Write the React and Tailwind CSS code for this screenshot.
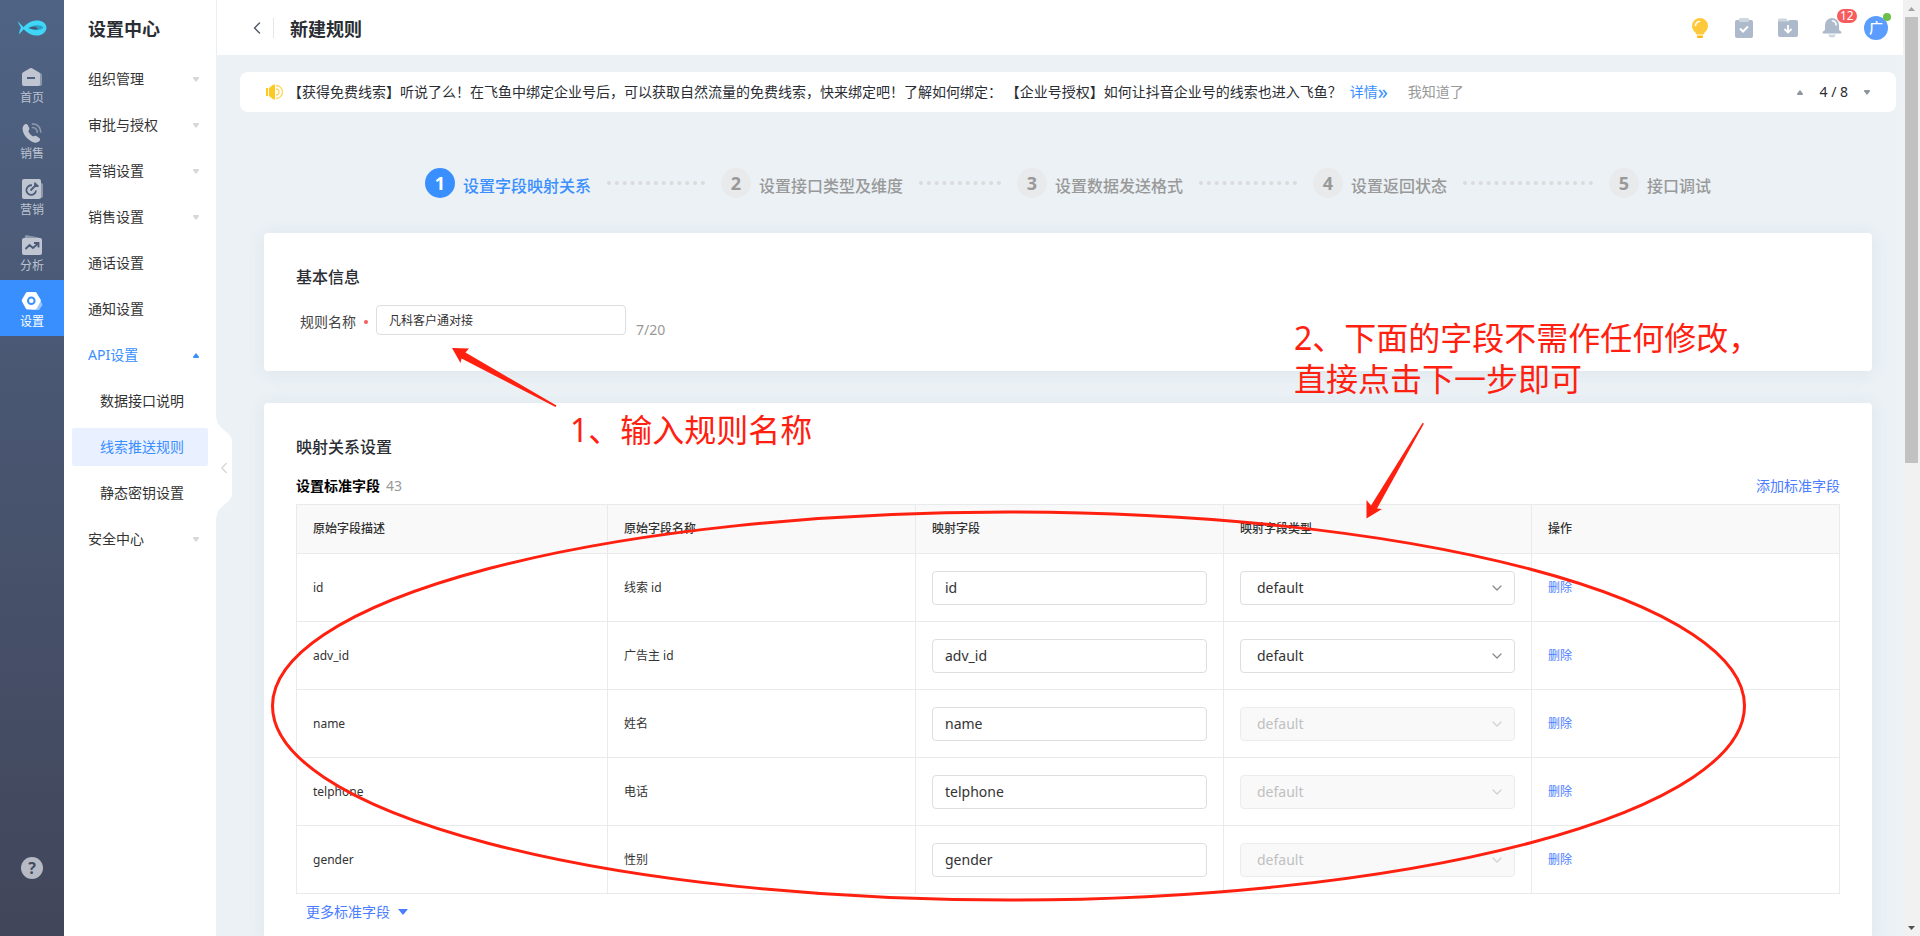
import React, { useState } from "react";
import { ChevronDown, ChevronLeft } from "lucide-react";

const navItems = [
  { label: "首页", icon: HomeIcon },
  { label: "销售", icon: PhoneIcon },
  { label: "营销", icon: TargetIcon },
  { label: "分析", icon: ChartIcon },
  { label: "设置", icon: SettingIcon, active: true },
];

const menuItems = [
  { label: "组织管理", arrow: "down" },
  { label: "审批与授权", arrow: "down" },
  { label: "营销设置", arrow: "down" },
  { label: "销售设置", arrow: "down" },
  { label: "通话设置" },
  { label: "通知设置" },
  {
    label: "API设置",
    arrow: "up",
    children: ["数据接口说明", "线索推送规则", "静态密钥设置"],
  },
  { label: "安全中心", arrow: "down" },
];

const steps = [
  "设置字段映射关系",
  "设置接口类型及维度",
  "设置数据发送格式",
  "设置返回状态",
  "接口调试",
];

const initialFields = [
  { key: "id", name: "线索 id" },
  { key: "adv_id", name: "广告主 id" },
  { key: "name", name: "姓名", disabled: true },
  { key: "telphone", name: "电话", disabled: true },
  { key: "gender", name: "性别", disabled: true },
];

function HomeIcon() {
  return (
    <svg width="22" height="22" viewBox="0 0 22 22">
      <path d="M15 5l4 2a2 2 0 0 1 2 2v9a2 2 0 0 1-2 2h-4z" fill="#8c98ac" />
      <path
        d="M2.2 6.2L9 2.2a2 2 0 0 1 2 0l6.8 4a2 2 0 0 1 1.2 1.8V18a2 2 0 0 1-2 2H3a2 2 0 0 1-2-2V8a2 2 0 0 1 1.200-1.800z"
        fill="#c0c6d1"
      />
      <rect x="6" y="11" width="8" height="2" fill="#4d607e" />
    </svg>
  );
}

function PhoneIcon() {
  return (
    <svg width="22" height="22" viewBox="0 0 22 22">
      <path
        d="M3 3c1.500-1.500 3.200-1.200 4 .5l1.200 2.600c.5 1.100 0 1.900-.9 2.800.9 2.500 2.600 4.400 5 5.700 1-1 2-1.200 3-.6l2.600 1.700c1.500 1 1.500 2.400.3 3.600-1.700 1.600-4 1.900-6.600.7C6.500 17.600 3 13.800 1.800 8.600 1.300 6.300 1.600 4.400 3 3z"
        fill="#c0c6d1"
      />
      <g fill="none" stroke="#8c98ac" strokeWidth="1.700" strokeLinecap="round">
        <path d="M11.500 1.800c4.800.2 8 3.500 8.300 8.200" />
        <path d="M11.500 5.500c2.800.2 4.500 1.900 4.700 4.700" />
      </g>
    </svg>
  );
}

function TargetIcon() {
  return (
    <svg width="22" height="22" viewBox="0 0 22 22">
      <rect x="5" y="5" width="17" height="15" rx="2" fill="#8c98ac" />
      <rect x="1" y="1" width="19" height="20" rx="2" fill="#c0c6d1" />
      <g fill="none" stroke="#4b5d7a" strokeWidth="1.800">
        <path d="M11 7.300a4.800 4.800 0 1 0 4 5.200" />
        <path d="M9.500 12.500L16 6M14 4.500v3.500h3.500" />
      </g>
    </svg>
  );
}

function ChartIcon() {
  return (
    <svg width="22" height="22" viewBox="0 0 22 22">
      <path d="M5 1l13 2.500v3H3L4 2z" fill="#8c98ac" />
      <rect x="1" y="4" width="20" height="17" rx="2" fill="#c0c6d1" />
      <path
        d="M4.500 15l4-4 3.500 3 5-4.500M13 9h4.500v4.500"
        fill="none"
        stroke="#4b5b77"
        strokeWidth="1.800"
      />
    </svg>
  );
}

function SettingIcon() {
  return (
    <svg width="22" height="22" viewBox="0 0 22 22">
      <path d="M14 6l5 3 2.500 6-3.500 5h-8z" fill="#9cc5ff" />
      <path
        d="M6.500 2h7.500a2 2 0 0 1 1.700 1L19.500 9.500a2 2 0 0 1 0 2L15.700 18.500a2 2 0 0 1-1.700 1H6.500a2 2 0 0 1-1.700-1L1 11.500a2 2 0 0 1 0-2L4.800 3a2 2 0 0 1 1.700-1z"
        fill="#fff"
      />
      <circle cx="10.300" cy="10.800" r="3.300" fill="none" stroke="#3a8fff" strokeWidth="2" />
    </svg>
  );
}

function Triangle({ up, className }) {
  return (
    <svg width="6" height="5" viewBox="0 0 6 5" className={className}>
      <path
        d={up ? "M3 0L5.800 3.500V5H.2V3.500z" : "M3 5L.2 1.500V0h5.600v1.500z"}
        fill="currentColor"
      />
    </svg>
  );
}

function Rail() {
  return (
    <nav className="flex w-16 shrink-0 flex-col items-center bg-linear-to-b from-[#4f6384] to-[#41465a]">
      <a href="#" aria-label="飞鱼" className="flex h-14 items-center">
        <svg width="30" height="16" viewBox="0 0 30 16">
          <path
            d="M.5 1C3 3.500 5 5.500 6.500 7.200 10 3 15 .5 20 .5c5 0 9 2.500 9.500 7.200C29 12.500 25 15.500 20 15.500c-5 0-9.500-2-13.300-6.300L2 14.500C2.500 11 3 9 4 7.800 3 6 1.500 3.500.5 1z"
            fill="#3fd6f8"
          />
          <path d="M11 8c3-2 6-2.800 9-2.800 3 0 5 .8 6.500 2.300-1.500 1.700-4 2.500-7 2.500-3 0-6-.7-8.500-2z" fill="#2b9fc4" />
          <path d="M12 8c2.500-1.200 4.500-1.500 7-1.300l2 2.600c-3.500.5-6 0-9-1.300z" fill="#455878" />
        </svg>
      </a>
      {navItems.map(({ label, icon: Icon, active }) => (
        <a
          key={label}
          href="#"
          className={
            active
              ? "flex h-14 w-full flex-col items-center bg-[#3a8fff] pt-[10px] text-xs leading-4 text-white"
              : "flex h-14 w-full flex-col items-center pt-[10px] text-xs leading-4 text-[#bcc3cf]"
          }
        >
          <Icon />
          <span className="mt-[2px]">{label}</span>
        </a>
      ))}
      <button
        aria-label="帮助"
        className="mt-auto mb-[57px] flex size-[22px] items-center justify-center rounded-full bg-[#b6bac4] text-base font-bold text-[#434b60]"
      >
        ?
      </button>
    </nav>
  );
}

function SideMenu() {
  return (
    <aside className="relative w-[152px] shrink-0 bg-white text-sm text-[#333]">
      <h1 className="flex h-14 items-center pt-[2px] pl-6 text-lg font-bold text-[#2a2d33]">
        设置中心
      </h1>
      <ul>
        {menuItems.map((item) => (
          <li key={item.label}>
            <a
              href="#"
              className={
                item.children
                  ? "flex h-[46px] items-center justify-between pr-[17px] pl-6 text-[#3a8fff]"
                  : "flex h-[46px] items-center justify-between pr-[17px] pl-6"
              }
            >
              {item.label}
              {item.arrow && (
                <Triangle
                  up={item.arrow === "up"}
                  className={item.arrow === "up" ? "text-[#3a8fff]" : "text-[#d5d7db]"}
                />
              )}
            </a>
            {item.children && (
              <ul>
                {item.children.map((child, i) => (
                  <li key={child} className="px-2 py-1">
                    <a
                      href="#"
                      className={
                        i === 1
                          ? "flex h-[38px] items-center rounded-xs bg-[#e9f0ff] pl-7 text-[#3a8fff]"
                          : "flex h-[38px] items-center pl-7"
                      }
                    >
                      {child}
                    </a>
                  </li>
                ))}
              </ul>
            )}
          </li>
        ))}
      </ul>
      {/* collapse handle sticking out of the menu */}
      <button
        aria-label="收起"
        className="absolute top-[414px] left-full z-10 flex h-[108px] w-4 items-center justify-center text-[#d3d6da]"
      >
        <svg width="16" height="108" viewBox="0 0 16 108" className="absolute inset-0">
          <path d="M0 0c0 8 3 12 8 16 5 4 8 7 8 12v51c0 5-3 8-8 12-5 4-8 8-8 17z" fill="#fff" />
        </svg>
        <ChevronLeft size={18} strokeWidth={1.800} className="relative shrink-0" />
      </button>
    </aside>
  );
}

function Header() {
  return (
    <header className="flex h-[55px] shrink-0 items-center border-l border-[#e9eff4] bg-white pr-[5px] pl-8">
      <button aria-label="返回" className="flex w-4 justify-center text-[#555b66]">
        <ChevronLeft size={20} strokeWidth={1.800} className="shrink-0" />
      </button>
      <span className="mx-2 h-5 w-px bg-[#e3e6ea]" />
      <h2 className="pt-[2px] pl-2 text-lg font-bold text-[#2a2d33]">新建规则</h2>
      <div className="ml-auto flex items-center">
        <button aria-label="提示" className="flex w-11 justify-center">
          <svg width="18" height="22" viewBox="0 0 18 22">
            <path
              d="M9 1a8 8 0 0 1 8 8c0 3-1.500 4.600-3 6.200-.8.900-1.200 1.300-1.200 2.300H5.200c0-1-.4-1.400-1.200-2.300C2.500 13.600 1 12 1 9a8 8 0 0 1 8-8z"
              fill="#ffc93c"
            />
            <path d="M6 18.500h6v1.500a1 1 0 0 1-1 1H7a1 1 0 0 1-1-1z" fill="#ffb914" />
            <path d="M4.500 8.500a4.500 4.500 0 0 1 4-4" fill="none" stroke="#fff" strokeWidth="1.600" strokeLinecap="round" />
          </svg>
        </button>
        <button aria-label="任务" className="flex w-11 justify-center">
          <svg width="20" height="22" viewBox="0 0 20 22">
            <rect x="5" y="1" width="10" height="5" rx="1.500" fill="#ced6e0" />
            <rect x="1" y="3" width="18" height="18" rx="2" fill="#adbacc" />
            <path d="M5 1.800h10v1.700a1.500 1.500 0 0 1-1.500 1.500h-7A1.500 1.500 0 0 1 5 3.500z" fill="#ced6e0" />
            <path d="M6 11.500l3 3 5-5" fill="none" stroke="#fff" strokeWidth="2" />
          </svg>
        </button>
        <button aria-label="下载" className="flex w-11 justify-center">
          <svg width="22" height="22" viewBox="0 0 22 22">
            <path d="M1 3a1.500 1.500 0 0 1 1.500-1.500H9L12 5v4H1z" fill="#ced6e0" />
            <path d="M1 4.500h10L12.500 3H19a2 2 0 0 1 2 2v13a2 2 0 0 1-2 2H3a2 2 0 0 1-2-2z" fill="#adbacc" />
            <path d="M11 8v7.500M7.500 12l3.500 3.500 3.500-3.500" fill="none" stroke="#fff" strokeWidth="1.800" />
          </svg>
        </button>
        <button aria-label="通知" className="relative flex w-11 justify-center">
          <svg width="20" height="22" viewBox="0 0 20 22">
            <path d="M6.500 17.500h7a3.500 3 0 0 1-7 0z" fill="#ced6e0" />
            <path
              d="M10 1a7 7 0 0 1 7 7v5l2 1.500c.8.700.5 2-.5 2h-17c-1 0-1.300-1.300-.5-2L3 13V8a7 7 0 0 1 7-7z"
              fill="#adbacc"
            />
            <path d="M10.500 4A3.500 3.500 0 0 1 14 8" fill="none" stroke="#fff" strokeWidth="1.600" strokeLinecap="round" />
          </svg>
          <span className="absolute -top-2 left-[27px] h-[14px] rounded-full bg-[#f75b5b] px-[3px] text-xs leading-[14px] text-white">
            12
          </span>
        </button>
        <button aria-label="账号" className="relative flex w-11 justify-center">
          <span className="flex size-6 items-center justify-center rounded-full bg-[#5b9dff] text-sm font-medium text-white">
            广
          </span>
          <span className="absolute -top-[3px] right-[7px] size-2 rounded-full bg-[#6cc04a]" />
        </button>
      </div>
    </header>
  );
}

function Notice() {
  return (
    <div className="mt-[17px] mr-[7px] ml-6 flex h-10 items-center rounded-lg bg-white pr-6 pl-[26px] text-sm text-[#2a2d33]">
      <svg width="17" height="16" viewBox="0 0 17 16" className="mr-[5px] shrink-0">
        <path d="M0 4h2v8H0zM3 4l4.500-3.500H9v15H7.500L3 12z" fill="#ffc81f" />
        <path d="M10 5a3 3 0 0 1 0 6M10 1.500a6.500 6.500 0 0 1 0 13" fill="none" stroke="#ffd75e" strokeWidth="1.300" />
      </svg>
      <p className="whitespace-nowrap">
        【获得免费线索】听说了么！在飞鱼中绑定企业号后，可以获取自然流量的免费线索，快来绑定吧！了解如何绑定：
        【企业号授权】如何让抖音企业号的线索也进入飞鱼？
      </p>
      <a href="#" className="ml-2 flex items-center whitespace-nowrap text-[#3a8fff]">
        详情<span className="text-xl leading-5">»</span>
      </a>
      <button className="ml-5 whitespace-nowrap text-[#999]">我知道了</button>
      <div className="ml-auto flex items-center gap-4 pr-[2px]">
        <button aria-label="上一条">
          <Triangle up className="text-[#8f959e]" />
        </button>
        <span className="whitespace-nowrap">4 / 8</span>
        <button aria-label="下一条">
          <Triangle className="text-[#8f959e]" />
        </button>
      </div>
    </div>
  );
}

function Steps() {
  return (
    <ol className="mx-auto mt-14 flex w-full max-w-[1286px] font-medium">
      {steps.map((step, i) => (
        <li
          key={step}
          className={i < steps.length - 1 ? "flex flex-1 items-center" : "flex items-center"}
        >
          <span
            className={
              i === 0
                ? "flex size-[30px] shrink-0 items-center justify-center rounded-full bg-[#3a8fff] text-lg font-bold text-white"
                : "flex size-[30px] shrink-0 items-center justify-center rounded-full bg-[#e9eaeb] text-lg font-bold text-[#999]"
            }
          >
            {i + 1}
          </span>
          <span
            className={
              i === 0
                ? "pt-[6px] pl-2 whitespace-nowrap text-[#3a8fff]"
                : "pt-[6px] pl-2 whitespace-nowrap text-[#999]"
            }
          >
            {step}
          </span>
          {i < steps.length - 1 && (
            <span className="mx-4 flex-1 border-t-4 border-dotted border-[#d9dbdd]" />
          )}
        </li>
      ))}
    </ol>
  );
}

function MappingTable() {
  const [fields, setFields] = useState(initialFields);

  function handleDelete(key) {
    setFields(fields.filter((field) => field.key !== key));
  }

  return (
    <table className="mt-2 w-full table-fixed border-collapse text-left text-xs text-[#333]">
      <thead>
        <tr className="h-[49px] bg-[#f9f9fa]">
          <th className="w-[311px] border border-[#e8eaec] px-4 font-medium">原始字段描述</th>
          <th className="border border-[#e8eaec] px-4 font-medium">原始字段名称</th>
          <th className="border border-[#e8eaec] px-4 font-medium">映射字段</th>
          <th className="border border-[#e8eaec] px-4 font-medium">映射字段类型</th>
          <th className="border border-[#e8eaec] px-4 font-medium">操作</th>
        </tr>
      </thead>
      <tbody>
        {fields.map((field) => (
          <tr key={field.key} className="h-[68px]">
            <td className="border border-[#e8eaec] px-4">{field.key}</td>
            <td className="border border-[#e8eaec] px-4">{field.name}</td>
            <td className="border border-[#e8eaec] px-4">
              <input
                type="text"
                aria-label={`${field.name} 映射字段`}
                defaultValue={field.key}
                className="block h-[34px] w-full rounded border border-[#dcdee2] px-3 text-sm outline-none"
              />
            </td>
            <td className="border border-[#e8eaec] px-4">
              <div className="relative">
                <select
                  aria-label={`${field.name} 映射字段类型`}
                  disabled={field.disabled}
                  className="block h-[34px] w-full appearance-none rounded border border-[#dcdee2] bg-white px-4 text-sm outline-none disabled:border-[#ececee] disabled:bg-[#f9f9fa] disabled:text-[#c0c0c0] disabled:opacity-100"
                >
                  <option>default</option>
                </select>
                <ChevronDown
                  size={16}
                  strokeWidth={1.800}
                  className={
                    field.disabled
                      ? "pointer-events-none absolute top-[9px] right-[10px] text-[#d0d0d0]"
                      : "pointer-events-none absolute top-[9px] right-[10px] text-[#888]"
                  }
                />
              </div>
            </td>
            <td className="border border-[#e8eaec] px-4">
              <button className="text-[#4a7dff]" onClick={() => handleDelete(field.key)}>
                删除
              </button>
            </td>
          </tr>
        ))}
      </tbody>
    </table>
  );
}

// red marks drawn on top of the page
function Annotations() {
  return (
    <div className="pointer-events-none absolute inset-0 z-20 text-[32px] leading-[41px] text-[#ff2010]">
      <svg className="absolute inset-0 h-full w-full">
        <ellipse cx="1008.500" cy="706" rx="736" ry="194" fill="none" stroke="#ff2010" strokeWidth="3" />
        <path d="M452 348L469 348.500 465.500 352.500 556.500 405.500 555.500 407 461.500 358.500 460.500 363z" fill="#ff2010" />
        <path d="M1366.500 518.500L1366.500 500 1371 505.500 1422.500 423 1424 423.500 1377 508.500 1382 509z" fill="#ff2010" />
      </svg>
      <p className="absolute top-[409px] left-[570px] whitespace-nowrap">1、输入规则名称</p>
      <p className="absolute top-[317px] left-[1294px] whitespace-nowrap">
        2、下面的字段不需作任何修改，
        <br />
        直接点击下一步即可
      </p>
    </div>
  );
}

function Scrollbar() {
  return (
    <div className="flex w-[17px] shrink-0 flex-col items-center bg-[#f1f1f1]">
      <div className="flex h-[17px] items-center">
        <svg width="7" height="4" viewBox="0 0 7 4">
          <path d="M3.500 0L7 4H0z" fill="#a3a3a3" />
        </svg>
      </div>
      <div className="h-[446px] w-[13px] bg-[#c1c1c1]" />
      <div className="mt-auto flex h-[17px] items-center">
        <svg width="7" height="4" viewBox="0 0 7 4">
          <path d="M3.500 4L0 0h7z" fill="#505050" />
        </svg>
      </div>
    </div>
  );
}

export default function App() {
  const [ruleName, setRuleName] = useState("凡科客户通对接");

  return (
    <div className="relative flex h-screen overflow-hidden bg-[#ebf1f5] font-['Noto_Sans','Noto_Sans_CJK_SC',sans-serif]">
      <Rail />
      <SideMenu />
      <div className="flex min-w-0 flex-1 flex-col">
        <Header />
        <main className="flex min-h-0 flex-1 flex-col overflow-hidden">
          <Notice />
          <div className="flex flex-1 flex-col pr-[31px] pl-12">
            <Steps />
            <section className="mt-[35px] h-[138px] shrink-0 rounded bg-white px-8 pt-8 shadow-[0_2px_16px_rgba(190,205,220,0.3)]">
              <h3 className="text-base font-medium text-[#2a2d33]">基本信息</h3>
              <div className="mt-[11px] flex items-center pl-1">
                <label htmlFor="ruleName" className="pt-1 text-sm text-[#444]">
                  规则名称
                </label>
                <span className="mx-2 mt-1 size-1 rounded-full bg-[#f75b5b]" />
                <input
                  id="ruleName"
                  type="text"
                  maxLength={20}
                  value={ruleName}
                  onChange={(e) => setRuleName(e.target.value)}
                  className="h-[30px] w-[250px] rounded border border-[#dcdee2] px-3 text-xs text-[#333] outline-none"
                />
                <span className="pt-5 pl-[10px] text-sm text-[#999]">{ruleName.length}/20</span>
              </div>
            </section>
            <section className="mt-8 flex-1 shrink-0 rounded-t bg-white px-8 pt-8 shadow-[0_2px_16px_rgba(190,205,220,0.3)]">
              <h3 className="text-base font-medium text-[#2a2d33]">映射关系设置</h3>
              <div className="mt-[17px] flex items-center justify-between text-sm">
                <p className="font-bold text-black">
                  设置标准字段
                  <span className="pl-[6px] font-normal text-[#999]">43</span>
                </p>
                <button className="text-[#4a7dff]">添加标准字段</button>
              </div>
              <MappingTable />
              <button className="mt-2 ml-[10px] flex items-center gap-2 text-sm text-[#4a7dff]">
                更多标准字段
                <svg width="10" height="6" viewBox="0 0 10 6">
                  <path d="M0 0h10L5 6z" fill="currentColor" />
                </svg>
              </button>
            </section>
          </div>
        </main>
      </div>
      <Scrollbar />
      <Annotations />
    </div>
  );
}
